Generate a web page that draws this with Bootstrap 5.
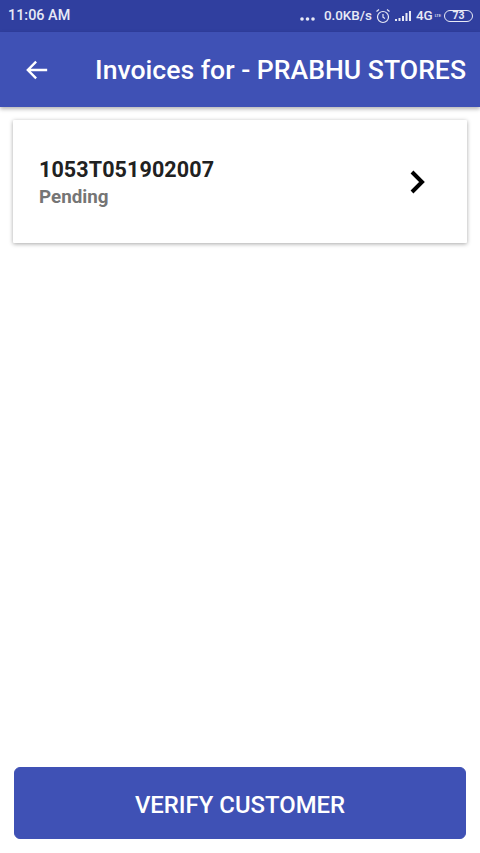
<!DOCTYPE html>
<html lang="en">
<head>
<meta charset="utf-8">
<meta name="viewport" content="width=device-width, initial-scale=1">
<link rel="stylesheet" href="https://cdn.jsdelivr.net/npm/bootstrap@5.3.0/dist/css/bootstrap.min.css">
<style>
html,body{height:853px;overflow:hidden}
body{font-family:Roboto,"Liberation Sans",sans-serif;background:#fff}
.phone-shell{height:853px}
.status-strip{height:32px;background:#303f9f;color:#e8eaf6;font-size:14.4px;font-weight:500;padding:0 8px}
.status-right{gap:3px;font-size:13.4px}
.status-dots{margin-right:6px;margin-top:7px}
.batt-pill{width:29px;height:12px;border:1.5px solid #e8eaf6;border-radius:6px;font-size:10.5px;line-height:9px;text-align:center;margin-left:0;margin-right:-1px;font-weight:700}
.lte-mini{font-size:4px;margin-left:-1px}
.app-head{height:75px;background:#3f51b5;color:#fff;box-shadow:0 2px 4px rgba(0,0,0,.3);padding-left:26px;padding-right:14px}
.app-head-title{font-size:26.6px;font-weight:500;white-space:nowrap;margin-left:47px;line-height:1;padding-top:2px}
.invoice-box{margin:13px 13px 0;height:123px;border-radius:1px;padding:0 26px;box-shadow:0 1px 4px rgba(0,0,0,.35)}
.invoice-text{padding-top:4px}
.invoice-no{font-size:21.5px;font-weight:700;color:#212121;line-height:26px;letter-spacing:.1px}
.invoice-state{font-size:18.8px;font-weight:700;color:#757575;line-height:28px}
.chev-wrap{margin-right:15px}
.foot-zone{padding:0 14px 14px}
.verify-btn{height:72px;background:#3f51b5;border-color:#3f51b5;color:#fff;font-size:23.9px;font-weight:500;border-radius:6px;padding-top:11px}
</style>
</head>
<body>
<div class="phone-shell d-flex flex-column">
  <div class="status-strip d-flex align-items-center justify-content-between">
    <span>11:06 AM</span>
    <div class="status-right d-flex align-items-center">
      <svg class="status-dots" width="15" height="4" viewBox="0 0 15 4" fill="#e8eaf6" aria-hidden="true"><circle cx="2" cy="2" r="1.800"/><circle cx="7.500" cy="2" r="1.800"/><circle cx="13" cy="2" r="1.800"/></svg>
      <span>0.0KB/s</span>
      <svg width="16" height="16" viewBox="0 0 16 16" fill="none" stroke="#e8eaf6" stroke-width="1.2" aria-hidden="true"><circle cx="8" cy="9" r="5.500"/><path d="M8 6v3.200l2 1.200M1.500 3.500 4 1.500M14.500 3.500 12 1.500"/></svg>
      <svg width="19" height="12" viewBox="0 0 19 12" fill="#e8eaf6" aria-hidden="true"><rect x="1" y="9" width="2" height="2"/><rect x="4.500" y="8" width="2" height="3"/><rect x="8" y="6" width="2" height="5"/><rect x="11.500" y="3" width="2" height="8"/><rect x="15" y="1" width="2" height="10"/></svg>
      <span>4G</span><span class="lte-mini">LTE</span>
      <span class="batt-pill">73</span>
    </div>
  </div>
  <header class="app-head d-flex align-items-center">
    <svg width="24" height="24" viewBox="0 0 24 24" fill="none" stroke="#fff" stroke-width="2.6" aria-hidden="true"><path d="M23 12H2M11 3 2 12l9 9"/></svg>
    <div class="app-head-title">Invoices for - PRABHU STORES</div>
  </header>
  <main class="flex-grow-1">
    <div class="invoice-box card border-0 flex-row align-items-center justify-content-between">
      <div class="invoice-text">
        <div class="invoice-no">1053T051902007</div>
        <div class="invoice-state">Pending</div>
      </div>
      <svg class="chev-wrap" width="16" height="24" viewBox="0 0 16 24" fill="none" stroke="#000" stroke-width="4" aria-hidden="true"><path d="M2 2l10 10L2 22"/></svg>
    </div>
  </main>
  <div class="foot-zone">
    <button type="button" class="btn verify-btn w-100">VERIFY CUSTOMER</button>
  </div>
</div>
<script src="https://cdn.jsdelivr.net/npm/bootstrap@5.3.0/dist/js/bootstrap.bundle.min.js"></script>
</body>
</html>
